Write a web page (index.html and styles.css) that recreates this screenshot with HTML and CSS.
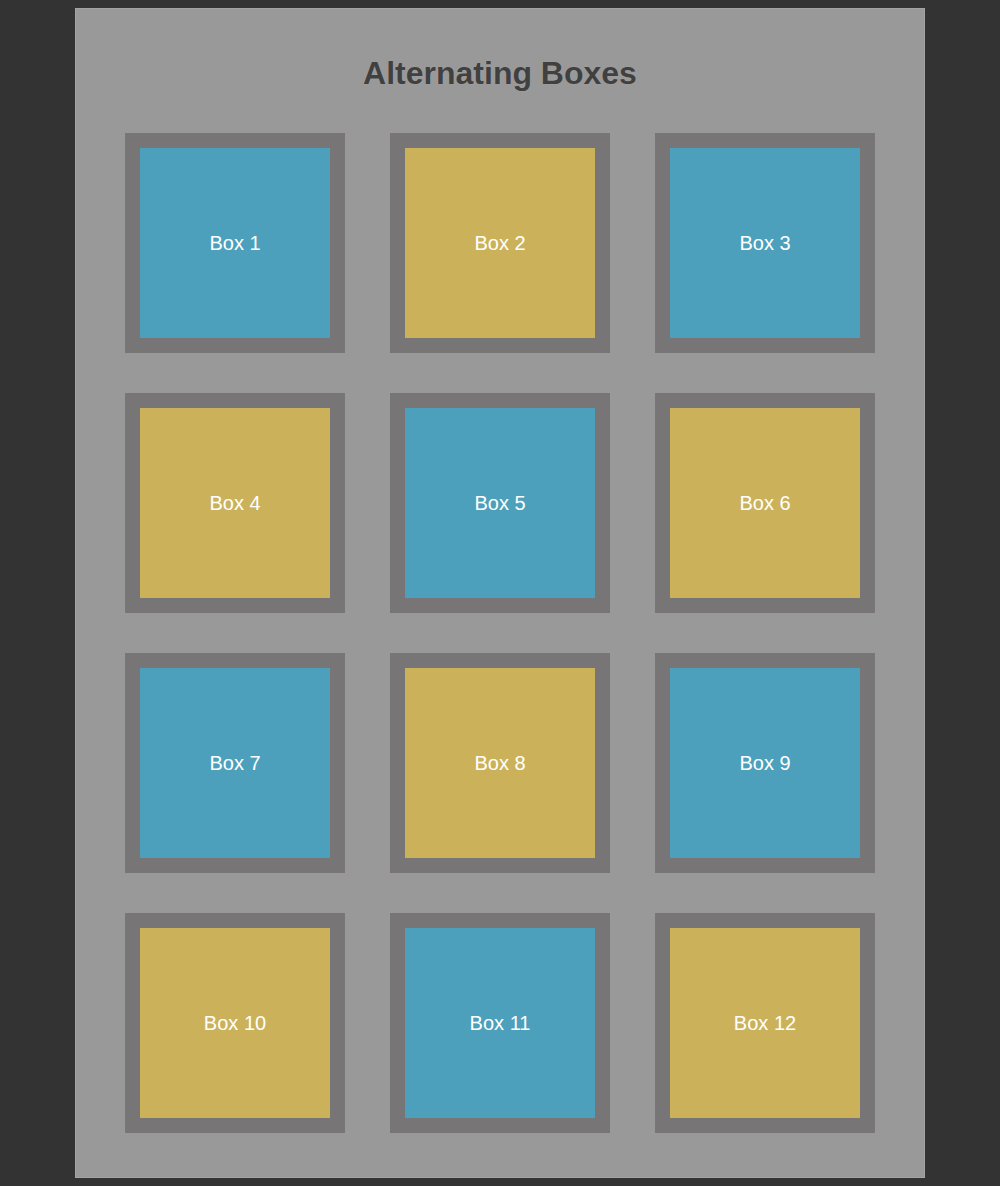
FILE: index.html
```html
<!DOCTYPE html>
<html lang="en">
<head>
  <meta charset="UTF-8">
  <meta name="viewport" content="width=device-width, initial-scale=1.0">
  <title>Alternating Boxes</title>
  <link rel="stylesheet" href="styles.css">
</head>
<body>
  <div class="container">
    <h1>Alternating Boxes</h1>
    <div class="grid">
      <div class="box blue">Box 1</div>
      <div class="box gold">Box 2</div>
      <div class="box blue">Box 3</div>
      <div class="box gold">Box 4</div>
      <div class="box blue">Box 5</div>
      <div class="box gold">Box 6</div>
      <div class="box blue">Box 7</div>
      <div class="box gold">Box 8</div>
      <div class="box blue">Box 9</div>
      <div class="box gold">Box 10</div>
      <div class="box blue">Box 11</div>
      <div class="box gold">Box 12</div>
    </div>
  </div>
</body>
</html>
```

FILE: styles.css
```css
* {
  box-sizing: border-box;
}

body {
  margin: 8px;
  background: #333333;
  font-family: 'Liberation Sans', Arial, Helvetica, sans-serif;
}

.container {
  width: 850px;
  height: 1170px;
  margin: 0 auto;
  padding: 0 49px 44px;
  background: #999999;
  border: 1px solid #a3a3a3;
}

h1 {
  margin: 46px 0 42px;
  font-size: 32px;
  line-height: 36px;
  font-weight: bold;
  text-align: center;
  color: #404040;
  text-shadow: 0 0 1px rgba(255, 255, 255, 0.25);
}

.grid {
  display: grid;
  grid-template-columns: repeat(3, 220px);
  column-gap: 45px;
  row-gap: 40px;
}

.box {
  width: 220px;
  height: 220px;
  border: 15px solid #777575;
  display: flex;
  align-items: center;
  justify-content: center;
  color: #ffffff;
  font-size: 20px;
  line-height: 1;
}

.blue {
  background: #4ca0bb;
}

.gold {
  background: #cbb25a;
}
```
